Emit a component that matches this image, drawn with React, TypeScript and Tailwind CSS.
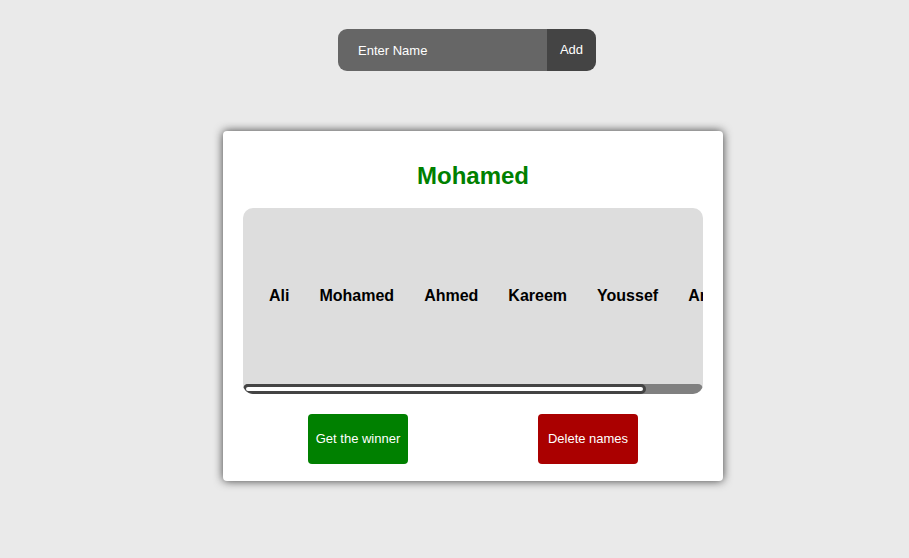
import React, { useState } from 'react';

const names = ['Ali', 'Mohamed', 'Ahmed', 'Kareem', 'Youssef', 'Arwa'];

const App: React.FC = () => {
  const [name, setName] = useState('');

  return (
    <div className="min-h-[558px] w-full bg-[#eaeaea] flex flex-col items-center pt-[29px] pl-[37px] font-['Liberation_Sans',Arial,sans-serif]">
      {/* input */}
      <div className="flex h-[42px] w-[258px] mr-[12px] rounded-[9px] overflow-hidden">
        <input
          value={name}
          onChange={e => setName(e.target.value)}
          placeholder="Enter Name"
          className="w-[209px] h-full bg-[#666666] pl-[20px] text-[13px] text-white placeholder:text-white outline-none"
        />
        <button className="flex-1 bg-[#444444] text-white text-[13px]">Add</button>
      </div>

      {/* card */}
      <div className="mt-[60px] w-[500px] h-[350px] bg-white rounded-[4px] shadow-[0_0_10px_rgba(0,0,0,0.75)] px-[20px] flex flex-col">
        <h2 className="text-[24px] leading-[28px] font-bold text-[#008000] text-center mt-[31px] mb-[18px]">
          Mohamed
        </h2>

        <div className="h-[186px] bg-[#dddddd] rounded-[10px] overflow-hidden flex flex-col">
          <div className="flex-1 flex items-center pl-[11px] overflow-hidden whitespace-nowrap">
            {names.map(n => (
              <span key={n} className="px-[15px] text-[16px] font-bold text-black shrink-0">
                {n}
              </span>
            ))}
          </div>
          {/* scrollbar */}
          <div className="h-[10px] bg-[#808080] rounded-full flex">
            <div className="w-[403px] h-full rounded-full border-[3px] border-[#444444] bg-white" />
          </div>
        </div>

        <div className="flex justify-around mt-[20px]">
          <button className="w-[100px] h-[50px] rounded-[4px] bg-[#008000] text-white text-[13px]">
            Get the winner
          </button>
          <button className="w-[100px] h-[50px] rounded-[4px] bg-[#aa0000] text-white text-[13px]">
            Delete names
          </button>
        </div>
      </div>
    </div>
  );
};

export default App;
